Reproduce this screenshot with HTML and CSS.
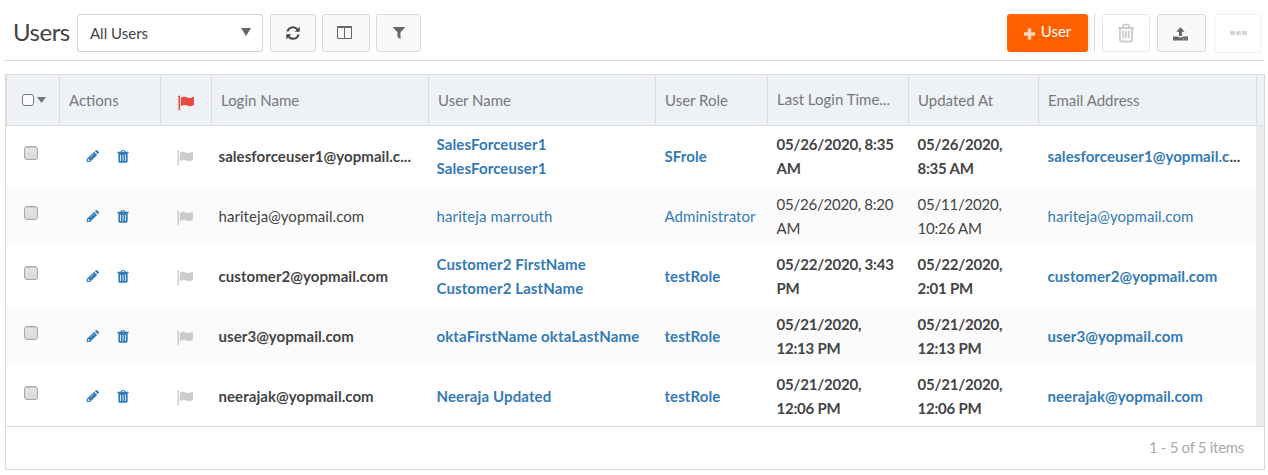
FILE: index.html
```html
<!DOCTYPE html>
<html lang="en">
<head>
<meta charset="utf-8">
<title>Users</title>
<link rel="stylesheet" href="styles.css">
</head>
<body>
<svg class="sprite" aria-hidden="true">
  <symbol id="flag" viewBox="0 0 16 16"><path d="M0 1.200C0 .3 2 .3 2 1.200V15.200H.5V2.200C0 2 0 1.600 0 1.200ZM2.800 3C4.500 1.900 7 1.300 9.300 2.600 11.300 3.700 13.200 2.800 15.200 1.800 15.700 1.600 16 1.800 16 2.300V9.800C13.500 11.400 11.600 11.800 9.300 10.600 7 9.500 5 10 2.800 11.300Z"/></symbol>
  <symbol id="pencil" viewBox="0 0 14 14"><path fill-rule="evenodd" d="M8.700 2 12 5.300 4.300 13H.8V9.700ZM3.300 12 4.100 11.200 2.700 9.800 2 10.500V11.200H2.700V12ZM8.700 3.600 4.200 8.100 4.500 8.400 9 3.900ZM9.500 1.200 10.400.3Q11.200-.3 12 .4L13.600 2Q14.300 2.800 13.600 3.600L12.800 4.500Z"/></symbol>
  <symbol id="trash" viewBox="0 0 12 14"><path fill-rule="evenodd" d="M3.300 2 3.800.7Q4 .2 4.600.2H7.400Q8 .2 8.200.7L8.700 2H12V3.400H11V12.200Q11 13.800 9.600 13.800H2.400Q1 13.800 1 12.200V3.400H0V2ZM4.600 2H7.400L7.100 1.200H4.900ZM3 5V11.800H3.900V5ZM5.550 5V11.800H6.450V5ZM8.100 5V11.800H9V5Z"/></symbol>
  <symbol id="trash-line" viewBox="0 0 16 20"><path d="M.2 5H15.800M4.300 4.700 5.200 2.500Q5.500 1.700 6.400 1.700H9.600Q10.500 1.700 10.800 2.500L11.700 4.700M2 5V16.500Q2 18.500 4 18.500H12Q14 18.500 14 16.500V5M5.200 7.800V15.300M8 7.800V15.300M10.800 7.800V15.300" fill="none" stroke="currentColor" stroke-width="1.800"/></symbol>
  <symbol id="refresh" viewBox="0 0 14 14"><path d="M1.400 5.600A5.700 5.700 0 0 1 11.400 3.400M12.600 8.400A5.700 5.700 0 0 1 2.600 10.600" fill="none" stroke="currentColor" stroke-width="2"/><path d="M13.700.8V5.800H8.700ZM.3 13.200V8.200H5.300Z"/></symbol>
  <symbol id="columns" viewBox="0 0 15 13"><path d="M1 0H14Q15 0 15 1V12Q15 13 14 13H1Q0 13 0 12V1Q0 0 1 0ZM1 2V12H7V2ZM8 2V12H14V2Z" fill-rule="evenodd"/></symbol>
  <symbol id="filter" viewBox="0 0 12 12"><path d="M.5 0H11.500Q12.200.3 11.800.8L7.500 5.200V11.500Q7.400 12.100 6.800 11.800L4.700 10Q4.500 9.800 4.500 9.500V5.200L.2.8Q-.2.3.5 0Z"/></symbol>
  <symbol id="plus" viewBox="0 0 12 12"><path d="M4.300.5H7.700V4.300H11.600V7.700H7.700V11.500H4.300V7.700H.4V4.300H4.300Z"/></symbol>
  <symbol id="upload" viewBox="0 0 15 14"><path fill-rule="evenodd" d="M7.500.2 11.700 4.800H9V9H6V4.800H3.300ZM0 9.500H5Q5.400 10.500 7.500 10.500T10 9.500H15V13.500H0ZM10 11.500V12.300H11V11.500ZM12.500 11.500V12.300H13.500V11.500Z"/></symbol>
</svg>

<header class="toolbar">
  <h1 class="title">Users</h1>
  <div class="select"><span>All Users</span><i class="arrow"></i></div>
  <button class="btn refresh" aria-label="Refresh"><svg><use href="#refresh"/></svg></button>
  <button class="btn columns" aria-label="Columns"><svg><use href="#columns"/></svg></button>
  <button class="btn filter" aria-label="Filter"><svg><use href="#filter"/></svg></button>
  <button class="add"><svg><use href="#plus"/></svg><span>User</span></button>
  <i class="divider"></i>
  <button class="btn remove" aria-label="Delete"><svg><use href="#trash-line"/></svg></button>
  <button class="btn upload" aria-label="Upload"><svg><use href="#upload"/></svg></button>
  <button class="btn more" aria-label="More"><i></i><i></i><i></i></button>
</header>

<main class="table">
  <div class="row head">
    <div class="pick"><i class="box"></i><i class="caret"></i></div>
    <div>Actions</div>
    <div class="flag"><svg><use href="#flag"/></svg></div>
    <div>Login Name</div><div>User Name</div><div>User Role</div>
    <div class="raised">Last Login Time...</div><div>Updated At</div><div>Email Address</div><div></div>
  </div>
  <div class="scroller">
    <div class="rows">
      <div class="row strong">
        <div class="pick"><i class="check"></i></div>
        <div class="actions"><svg class="pencil"><use href="#pencil"/></svg><svg class="trash"><use href="#trash"/></svg></div>
        <div class="flag"><svg><use href="#flag"/></svg></div>
        <div class="login nowrap">salesforceuser1@yopmail.c...</div>
        <div class="link name">SalesForceuser1<br>SalesForceuser1</div>
        <div class="link">SFrole</div>
        <div class="date">05/26/2020, 8:35<br>AM</div><div class="date">05/26/2020,<br>8:35 AM</div>
        <div class="link nowrap">salesforceuser1@yopmail.c<span class="dots">...</span></div>
      </div>
      <div class="row">
        <div class="pick"><i class="check"></i></div>
        <div class="actions"><svg class="pencil"><use href="#pencil"/></svg><svg class="trash"><use href="#trash"/></svg></div>
        <div class="flag"><svg><use href="#flag"/></svg></div>
        <div class="login">hariteja@yopmail.com</div>
        <div class="link name">hariteja marrouth</div>
        <div class="link">Administrator</div>
        <div class="date">05/26/2020, 8:20<br>AM</div><div class="date">05/11/2020,<br>10:26 AM</div>
        <div class="link">hariteja@yopmail.com</div>
      </div>
      <div class="row strong">
        <div class="pick"><i class="check"></i></div>
        <div class="actions"><svg class="pencil"><use href="#pencil"/></svg><svg class="trash"><use href="#trash"/></svg></div>
        <div class="flag"><svg><use href="#flag"/></svg></div>
        <div class="login">customer2@yopmail.com</div>
        <div class="link name">Customer2 FirstName<br>Customer2 LastName</div>
        <div class="link">testRole</div>
        <div class="date">05/22/2020, 3:43<br>PM</div><div class="date">05/22/2020,<br>2:01 PM</div>
        <div class="link">customer2@yopmail.com</div>
      </div>
      <div class="row strong">
        <div class="pick"><i class="check"></i></div>
        <div class="actions"><svg class="pencil"><use href="#pencil"/></svg><svg class="trash"><use href="#trash"/></svg></div>
        <div class="flag"><svg><use href="#flag"/></svg></div>
        <div class="login">user3@yopmail.com</div>
        <div class="link name">oktaFirstName oktaLastName</div>
        <div class="link">testRole</div>
        <div class="date">05/21/2020,<br>12:13 PM</div><div class="date">05/21/2020,<br>12:13 PM</div>
        <div class="link">user3@yopmail.com</div>
      </div>
      <div class="row strong">
        <div class="pick"><i class="check"></i></div>
        <div class="actions"><svg class="pencil"><use href="#pencil"/></svg><svg class="trash"><use href="#trash"/></svg></div>
        <div class="flag"><svg><use href="#flag"/></svg></div>
        <div class="login">neerajak@yopmail.com</div>
        <div class="link name">Neeraja Updated</div>
        <div class="link">testRole</div>
        <div class="date">05/21/2020,<br>12:06 PM</div><div class="date">05/21/2020,<br>12:06 PM</div>
        <div class="link">neerajak@yopmail.com</div>
      </div>
    </div>
    <div class="scrollbar"></div>
  </div>
  <footer class="pager">1 - 5 of 5 items</footer>
</main>
</body>
</html>
```
FILE: styles.css
```css
* { box-sizing: border-box; }
body { margin: 0; height: 475px; overflow: hidden; background: #fff; color: #444; font: 15px/24px Lato, sans-serif; }
svg { display: block; fill: currentColor; flex: none; overflow: visible; }
.sprite { position: absolute; width: 0; height: 0; }

.toolbar { display: flex; height: 61px; margin: 0 3px 0 5px; padding: 14px 3px 0 8px; border-bottom: 1px solid #dcdcdc; }
.title { width: 64px; margin: 0; font-size: 24px; font-weight: 400; line-height: 35px; letter-spacing: -.5px; }
.select { display: flex; align-items: center; justify-content: space-between; width: 186px; height: 38px; padding: 0 11px 1px 12px; border: 1px solid #d5d5d5; border-bottom-color: #ccc; border-radius: 3px; }
.arrow { width: 10px; height: 8px; margin-top: -1px; background: #666; clip-path: polygon(0 0, 100% 0, 50% 100%); }
.btn { display: flex; align-items: center; justify-content: center; height: 38px; padding: 0; border: 1px solid #d9d9d9; border-radius: 3px; background: #f9f9f9; color: #666; }
.refresh { width: 46px; margin-left: 7px; color: #444; }
.refresh svg { width: 14px; height: 14px; }
.columns { width: 48px; margin-left: 6px; }
.columns svg { width: 15px; height: 13px; margin: -1px 3px 0 0; }
.filter { width: 45px; margin-left: 6px; }
.filter svg { width: 12px; height: 12px; }
.add { display: flex; align-items: center; justify-content: center; gap: 5px; width: 81px; height: 38px; margin-left: auto; padding: 0 1px 4px 0; border: 0; border-radius: 3px; background: #ff6000; color: #fff; font: 15px/24px Lato, sans-serif; box-shadow: 2px 1px 3px #eee; }
.add svg { width: 13px; height: 12px; margin-top: 5px; color: #ffd5bc; }
.divider { width: 1px; height: 38px; margin: 0 7px 0 6px; background: #d9d9d9; }
.remove { width: 48px; background: #fff; border-color: #e6e6e6; color: #ccc; }
.remove svg { width: 16px; height: 20px; }
.upload { width: 49px; margin-left: 7px; }
.upload svg { width: 15px; height: 14px; margin: 2px 2px 0 0; }
.more { width: 48px; height: 39px; margin-left: 8px; gap: 1px; background: #fff; border-color: #f1f1f1; }
.more i { width: 5px; height: 4px; margin-top: -2px; border-radius: 1px; background: #d5d5d5; }

.table { width: 1260px; margin: 13px 0 0 5px; border: 1px solid #d9dbdd; }
.row { display: grid; grid-template-columns: 53px 101px 51px 217px 227px 112px 141px 130px 218px; height: 60px; }
.row > div { display: flex; flex-direction: column; justify-content: center; align-items: flex-start; padding: 0 0 0 9.500px; }
.row > .link { color: #337ab7; letter-spacing: .07px; }
.row > .name { padding-left: 8.500px; letter-spacing: .12px; }
.row > .login { padding-left: 7.500px; letter-spacing: .06px; }
.row > .date { letter-spacing: -.22px; }
.row > .nowrap { flex-direction: row; align-items: center; justify-content: flex-start; white-space: nowrap; }
.dots { color: #444; }
.strong { font-weight: 700; }
.row:nth-child(even) { background: #fbfbfb; }
.head { grid-template-columns: 53px 101px 51px 217px 227px 112px 141px 130px 218px 8px; height: 51px; background: #eef2f7; border-bottom: 1px solid #d9dbdd; color: #777; }
.head > div { padding: 0 0 1px 9px; border-left: 1px solid #d9dbdd; }
.head > .raised { padding-top: 0; padding-bottom: 3px; }
.row > .pick { flex-direction: row; align-items: center; justify-content: flex-start; }
.head > .pick { padding: 0 0 1px 15px; }
.box { width: 12px; height: 12px; border: 1px solid #777; border-radius: 3px; background: #fafbfc; }
.caret { width: 9px; height: 6px; margin: 1px 0 0 3px; background: #777; clip-path: polygon(0 0, 100% 0, 50% 100%); }
.rows .pick { padding: 0 0 6px 18px; }
.check { width: 14px; height: 14px; border: 1px solid #aaa; border-radius: 3px; background: linear-gradient(#e6e6e6, #d9d9d9); box-shadow: inset 0 1px 1px #c8c8c8; }
.rows .actions { flex-direction: row; align-items: center; justify-content: flex-start; gap: 18px; padding: 1px 0 0 27px; color: #337ab7; }
.pencil { width: 13px; height: 13px; }
.trash { width: 12px; height: 13px; }
.rows .flag { padding: 4px 0 0 17px; color: #ccc; }
.head .flag { padding: 5px 0 0 17px; color: #e74c3c; }
.flag svg { width: 16px; height: 16px; }
.scroller { display: flex; }
.rows { width: 1250px; }
.scrollbar { width: 8px; background: #ececec; }
.pager { height: 43px; padding: 8px 20px 0 0; border-top: 1px solid #d9dbdd; color: #aaa; text-align: right; letter-spacing: -.3px; }
```
